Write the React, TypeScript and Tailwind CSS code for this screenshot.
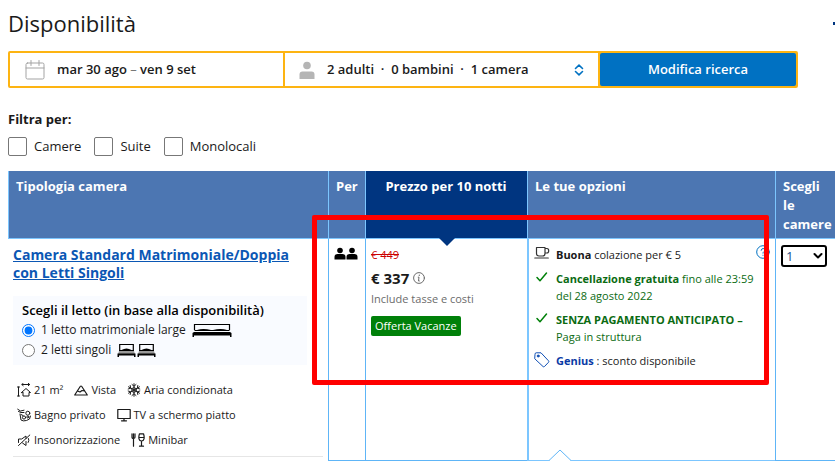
import { useState } from "react";
import type { ReactNode } from "react";

const line = {
  fill: "none",
  stroke: "currentColor",
  strokeLinecap: "round",
  strokeLinejoin: "round",
} as const;

function CalendarIcon() {
  return (
    <svg width="20" height="20" viewBox="0 0 20 20" className="shrink-0 text-[#a3a3a3]" {...line} aria-hidden="true">
      <rect x="1" y="3" width="18" height="16" rx="1.5" />
      <path d="M1 8h18M6 .5v5M14 .5v5" />
    </svg>
  );
}

function PersonIcon() {
  return (
    <svg width="16" height="18" viewBox="0 0 16 18" className="shrink-0 text-[#b5b5b5]" fill="currentColor" aria-hidden="true">
      <circle cx="8" cy="4.500" r="3.800" />
      <path d="M.5 18v-4.500q0-3 3-3h9q3 0 3 3V18z" />
    </svg>
  );
}

function GuestIcon() {
  return (
    <svg width="12" height="13" viewBox="0 0 12 13" fill="currentColor" aria-hidden="true">
      <circle cx="6" cy="3.500" r="2.800" />
      <path d="M.5 12.500V10q0-3 3-3h5q3 0 3 3v2.500z" />
    </svg>
  );
}

function UpDownIcon() {
  return (
    <svg width="10" height="12" viewBox="0 0 10 12" className="ml-auto shrink-0 text-[#0071c2]" {...line} strokeWidth="1.600" aria-hidden="true">
      <path d="M1.500 4.500 5 1.200l3.500 3.300M1.500 7.500 5 10.800l3.500-3.300" />
    </svg>
  );
}

function DoubleBedIcon() {
  return (
    <svg width="40" height="14" viewBox="0 0 40 14" aria-hidden="true">
      <path d="M2.500 7V1.500h35V7" fill="none" stroke="#000" strokeWidth="1.200" />
      <path d="M5 7q6-2 14 0zM21 7q8-2 14 0z" fill="#000" />
      <path d="M2.500 7.500h35" stroke="#000" />
      <path d="M2 9h36l1.500 1V14H38v-1.500H2V14H.5v-4z" fill="#000" />
    </svg>
  );
}

function SingleBedIcon() {
  return (
    <svg width="19" height="14" viewBox="0 0 19 14" aria-hidden="true">
      <path d="M2.700 7V1.500h13.600V7" fill="none" stroke="#000" strokeWidth="1.200" />
      <path d="M4.500 7q5-3 10 0z" fill="#000" />
      <path d="M2 7.500h15" stroke="#000" />
      <path d="M2 8h15l1 3H1z" fill="#999" />
      <path d="M.5 10.500h18V14H17v-1.500H2V14H.5z" fill="#000" />
    </svg>
  );
}

function Glyph({ children }: { children: ReactNode }) {
  return (
    <svg width="14" height="14" viewBox="0 0 14 14" className="shrink-0" {...line} aria-hidden="true">
      {children}
    </svg>
  );
}

const facilities: { label: ReactNode; icon: ReactNode }[][] = [
  [
    {
      label: <>21 m²</>,
      icon: (
        <path d="M5 1.500h7.500M6.200.3 4.800 1.500l1.400 1.200M11.300.3l1.400 1.200-1.400 1.200M1.500 4v9M.5 4h2M.5 13h2M4.500 9.500 9 5.500l4.500 4H12V13H6V9.500z" />
      ),
    },
    { label: "Vista", icon: <path d="M.7 12 6.200 3.500q.8-1 1.600 0L13.300 12zM3.500 8l2.500 1 2-1.500L10.500 8" strokeWidth="1.200" /> },
    {
      label: "Aria condizionata",
      icon: (
        <>
          <circle cx="7" cy="7" r="2.300" />
          <path d="M7 .7v12.600M1.500 3.800l11 6.400M12.500 3.800l-11 6.400M5 1.500l2 1.800 2-1.800M5 12.500l2-1.800 2 1.800M1.200 6l2.500-.8L3.200 2.500M12.800 6l-2.500-.8.5-2.700M1.200 8l2.500.8-.5 2.700M12.800 8l-2.500.8.5 2.700" />
        </>
      ),
    },
  ],
  [
    {
      label: "Bagno privato",
      icon: (
        <>
          <path d="M.7 1.200 3.500 3l3.500-.8M1.500 3.500 4 4.500h3M3 6l1 6q2 1.500 5.500.5l3-1.500 1-3M4 6.500l2 1" />
          <circle cx="10.800" cy="5.200" r="2" />
          <circle cx="7" cy="9.500" r="1.600" />
          <circle cx="10.800" cy="9" r="1" />
        </>
      ),
    },
    { label: "TV a schermo piatto", icon: <path d="M.8 1.500h12.400v9H.8zM7 10.500v2M4.500 12.800h5" strokeWidth="1.200" /> },
  ],
  [
    {
      label: "Insonorizzazione",
      icon: <path d="M1.500 12.500 12.800 2M1.500 9.500V6h3.200L9 3v2.500M5.500 10 9 12.500V8.500M11.500 5.500q1 2-.3 4" />,
    },
    {
      label: "Minibar",
      icon: (
        <path
          d="M1 .8v3.500q0 1.200 1.500 1.200T4 4.300V.8M2.500.8v12.400M8.500.8h4q1 3 .5 5-.5 2.200-2.500 2.200T8 5.800q-.5-2 .5-5zM8 4.500h5M10.500 8v5M8.500 13.200h4"
          strokeWidth="1.200"
        />
      ),
    },
  ],
];

const Check = () => (
  <svg width="16" height="14" viewBox="0 0 16 14" className="shrink-0 text-[#008009]" {...line} strokeWidth="1.500" aria-hidden="true">
    <path d="M3 7.500 6 10.800 12.500 3" />
  </svg>
);

const Cup = () => (
  <svg width="16" height="14" viewBox="0 0 16 14" className="shrink-0 text-[#333]" {...line} strokeWidth="1.200" aria-hidden="true">
    <path d="M2.500 1.500h8.500v6q0 2.500-2.500 2.500H5q-2.500 0-2.500-2.500zM11 2.500h2q1.700 0 1.700 2.200T13 7h-2M.8 12h13.500" />
  </svg>
);

const Tag = () => (
  <svg width="16" height="16" viewBox="0 0 16 16" className="shrink-0 text-[#0f4fb5]" {...line} aria-hidden="true">
    <path d="M1 2q0-1.200 1.200-1.200H7L14.500 8.800q.7.800 0 1.500l-4 4.200q-.8.700-1.500 0L1 7z" />
    <circle cx="4.200" cy="4" r="1" fill="currentColor" />
  </svg>
);

export default function App() {
  const [bed, setBed] = useState("double");

  return (
    <main className="overflow-x-clip bg-white pl-2 font-['Open_Sans','Noto_Sans',sans-serif] text-[#1a1a1a]">
      <header className="flex items-center justify-between pt-[7px]">
        <h1 className="text-[22px] leading-8">Disponibilità</h1>
        <span className="h-[3px] w-0.5 bg-[#003580]" />
      </header>

      <form
        className="mt-3 flex h-[37px] max-w-[790px] rounded-xs border-2 border-[#fdb412] bg-[#fdb412] text-[13px] font-semibold"
        onSubmit={(e) => e.preventDefault()}
      >
        <button type="button" className="flex w-[273px] items-center gap-3 bg-white pl-[15px]">
          <CalendarIcon />
          <span>
            mar 30 ago <span className="font-normal text-[#777]">–</span> ven 9 set
          </span>
        </button>
        <button type="button" className="ml-0.5 flex flex-1 items-center gap-3 bg-white px-[14px]">
          <PersonIcon />
          <span className="whitespace-pre">2 adulti  ·  0 bambini  ·  1 camera</span>
          <UpDownIcon />
        </button>
        <button type="submit" className="ml-0.5 w-[196px] rounded-xs bg-[#0071c2] text-white">
          Modifica ricerca
        </button>
      </form>

      <fieldset className="mt-[22px]">
        <legend className="text-[13px] leading-[18px] font-bold">Filtra per:</legend>
        <div className="mt-[9px] flex gap-[13px] text-[13px] leading-[19px]">
          {["Camere", "Suite", "Monolocali"].map((name) => (
            <label key={name} className="flex items-center gap-[7px]">
              <input type="checkbox" className="size-[19px] appearance-none rounded-xs border border-[#777] bg-white checked:bg-[#0071c2]" />
              {name}
            </label>
          ))}
        </div>
      </fieldset>

      <div className="relative mt-[15px]">
        <table className="w-full table-fixed border-separate border-spacing-0 text-left">
          <thead className="text-[13px] leading-[19px] text-white">
            <tr className="align-top *:border-b *:border-l *:border-[#7cc6ff] *:pt-1.5 *:pb-1 *:pl-[7px]">
              <th className="w-80 bg-[#4c76b2]">Tipologia camera</th>
              <th className="w-[37px] bg-[#4c76b2]">Per</th>
              <th className="relative w-[162px] bg-[#003580] pr-2 text-center">
                Prezzo per 10 notti
                <svg width="16" height="8" viewBox="0 0 16 8" className="absolute top-full left-1/2 -translate-x-1/2" aria-hidden="true">
                  <path d="M0 0h16L8 8z" fill="#003580" />
                </svg>
              </th>
              <th className="bg-[#4c76b2]">Le tue opzioni</th>
              <th className="w-[60px] bg-[#4c76b2] pr-1">
                Scegli
                <br />
                le
                <br />
                camere
              </th>
            </tr>
          </thead>
          <tbody>
            <tr className="align-top">
              <td className="px-[5px] pb-1">
                <a href="#camera" className="mt-[7px] block pr-5 text-[14px] leading-[18px] font-bold text-[#0b57b4] underline">
                  Camera Standard Matrimoniale/Doppia con Letti Singoli
                </a>
                <fieldset className="mt-[14px] mr-4 bg-[#f9fbff] px-[9px] pt-1 pb-[5px] text-[12px] leading-5">
                  <legend className="float-left w-full text-[13px] font-semibold whitespace-nowrap text-black">
                    Scegli il letto (in base alla disponibilità)
                  </legend>
                  <label className="flex w-full items-center gap-1.5">
                    <input type="radio" name="bed" className="size-[13px]" checked={bed === "double"} onChange={() => setBed("double")} />
                    1 letto matrimoniale large
                    <DoubleBedIcon />
                  </label>
                  <label className="flex w-full items-center gap-1.5">
                    <input type="radio" name="bed" className="size-[13px]" checked={bed === "twin"} onChange={() => setBed("twin")} />
                    2 letti singoli
                    <span className="flex gap-px">
                      <SingleBedIcon />
                      <SingleBedIcon />
                    </span>
                  </label>
                </fieldset>
                <div className="mt-4 flex flex-col gap-2 border-b border-[#e6e6e6] pb-2 pl-1 text-[11px] leading-[17px]">
                  {facilities.map((row, i) => (
                    <ul key={i} className="flex gap-[11px]">
                      {row.map((item, j) => (
                        <li key={j} className="flex items-center gap-[3px] whitespace-nowrap">
                          <Glyph>{item.icon}</Glyph>
                          {item.label}
                        </li>
                      ))}
                    </ul>
                  ))}
                </div>
              </td>

              <td className="border-b border-l border-[#5eb5f7] pt-2 pl-[5px] text-black">
                <span className="flex" role="img" aria-label="2 adulti">
                  <GuestIcon />
                  <GuestIcon />
                </span>
              </td>

              <td className="border-b border-l border-[#5eb5f7] pt-[7px] pl-[5px] text-[11px] leading-[17px]">
                <s className="block text-[#c00]">€ 449</s>
                <div className="mt-[5px] flex items-center gap-1 leading-5">
                  <strong className="text-[15px]">€ 337</strong>
                  <svg width="12" height="12" viewBox="0 0 12 12" className="text-[#6b6b6b]" {...line} aria-hidden="true">
                    <circle cx="6" cy="6" r="5.400" />
                    <path d="M5.200 5.200H6L5.500 9h.8" />
                    <path d="M6.300 3.200v.1" strokeWidth="1.300" />
                  </svg>
                </div>
                <p className="mt-0.5 text-[#6b6b6b]">Include tasse e costi</p>
                <span className="mt-[9px] inline-block rounded-xs bg-[#008009] px-1 leading-5 text-white">Offerta Vacanze</span>
              </td>

              <td className="relative border-b border-l-2 border-[#7cc6ff] pl-[5px] text-[11px] leading-[17px]">
                <ul className="flex flex-col gap-[7px] pt-[7px]">
                  <li className="flex gap-1.5">
                    <Cup />
                    <span>
                      <b>Buona</b> colazione per € 5
                    </span>
                  </li>
                  <li className="flex gap-1.5 text-[#0b6b12]">
                    <Check />
                    <span>
                      <b>Cancellazione gratuita</b> fino alle 23:59
                      <br />
                      del 28 agosto 2022
                    </span>
                  </li>
                  <li className="flex gap-1.5 text-[#0b6b12]">
                    <Check />
                    <span>
                      <b>SENZA PAGAMENTO ANTICIPATO –</b>
                      <br />
                      Paga in struttura
                    </span>
                  </li>
                  <li className="flex gap-1.5">
                    <Tag />
                    <span>
                      <b className="text-[#0a3aa5]">Genius</b> : sconto disponibile
                    </span>
                  </li>
                </ul>
                <svg width="14" height="14" viewBox="0 0 14 14" className="absolute top-1.5 right-[5px] text-[#0071c2]" {...line} aria-hidden="true">
                  <circle cx="7" cy="7" r="6.300" />
                  <path d="M5.200 5.300q.2-1.800 1.900-1.800t1.800 1.600q0 1-1.100 1.600-.8.500-.8 1.500M7 10.200v.2" />
                </svg>
                <svg width="22" height="12" viewBox="0 0 22 12" className="absolute -bottom-px left-5" aria-hidden="true">
                  <path d="M0 12 11 1l11 11z" fill="#fff" />
                  <path d="M0 11.500 11 1l11 10.500" fill="none" stroke="#5eb5f7" />
                </svg>
              </td>

              <td className="border-b border-l border-[#5eb5f7] pt-1.5 pl-[5px]">
                <span className="relative block w-[46px]">
                  <select
                    aria-label="Scegli le camere"
                    defaultValue="1"
                    className="block h-[22px] w-full appearance-none rounded-[3px] border-2 border-black bg-white pl-[3px] text-[13px] leading-[18px] text-[#1b4f8c]"
                  >
                    <option>0</option>
                    <option>1</option>
                    <option>2</option>
                  </select>
                  <svg width="10" height="8" viewBox="0 0 10 8" className="pointer-events-none absolute top-[7px] right-1 text-black" {...line} strokeWidth="2" aria-hidden="true">
                    <path d="M1.500 2 5 5.500 8.500 2" />
                  </svg>
                </span>
              </td>
            </tr>
          </tbody>
        </table>
        <div className="pointer-events-none absolute top-11 right-[66px] left-[304px] h-[170px] rounded-xs border-[5px] border-[#ff0000]" />
      </div>
    </main>
  );
}
